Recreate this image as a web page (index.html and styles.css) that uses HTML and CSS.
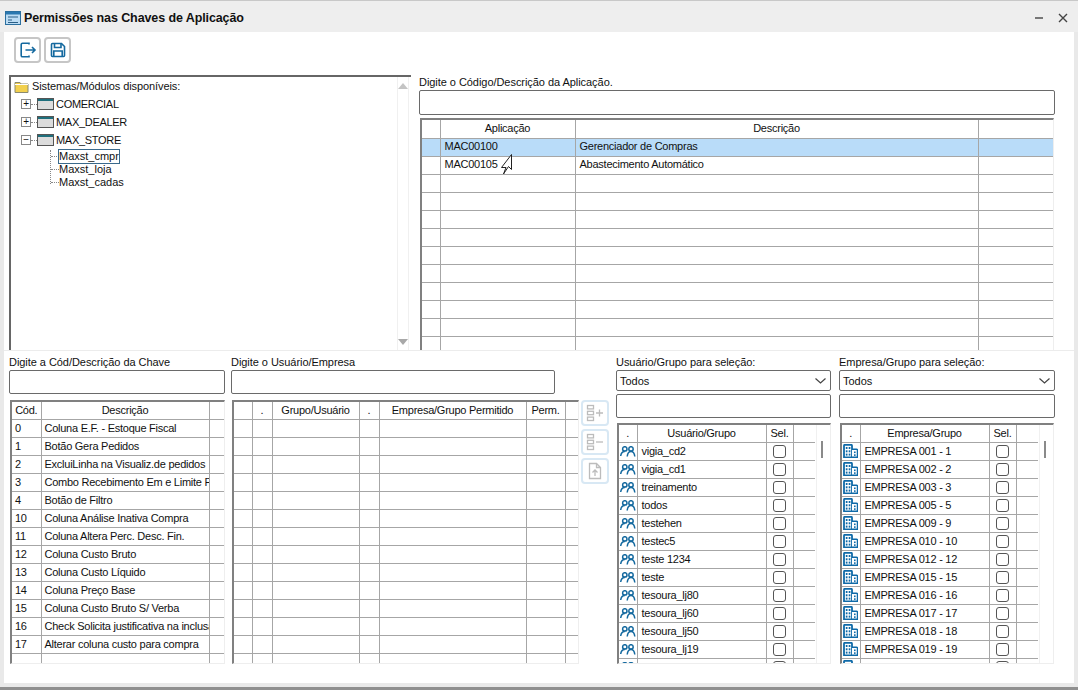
FILE: index.html
```html
<!DOCTYPE html>
<html lang="pt">
<head>
<meta charset="utf-8">
<title>Permissões nas Chaves de Aplicação</title>
<link rel="stylesheet" href="styles.css">
</head>
<body>
<svg class="defs" width="0" height="0">
  <symbol id="i-users" viewBox="0 0 16 11">
    <g fill="none" stroke="#14699f" stroke-width="1.500">
      <circle cx="4.800" cy="2.900" r="2.200"/><path d="M.7 10c.3-2.800 1.600-4.500 4.100-4.500"/>
      <circle cx="11" cy="2.900" r="2.200"/><path d="M7.200 10.500c.3-3 1.700-5 3.800-5s3.500 2 3.800 5"/>
    </g>
  </symbol>
  <symbol id="i-building" viewBox="0 0 15 14">
    <path d="M1 13.300V1.800q0-1 1-1h6q1 0 1 1v11.500z" fill="#fff" stroke="#0f6aa8" stroke-width="1.800"/>
    <path d="M9 5.300h4.500q1 0 1 1v7H9" fill="#fff" stroke="#0f6aa8" stroke-width="1.500"/>
    <g fill="#0f6aa8"><rect x="2.800" y="3" width="1.700" height="2"/><rect x="5.700" y="3" width="1.700" height="2"/><rect x="2.800" y="6.300" width="1.700" height="2"/><rect x="5.700" y="6.300" width="1.700" height="2"/><rect x="2.800" y="9.600" width="1.700" height="2"/><rect x="5.700" y="9.600" width="1.700" height="2"/><rect x="11" y="7.500" width="1.600" height="1.600"/><rect x="11" y="10.300" width="1.600" height="1.600"/></g>
  </symbol>
  <symbol id="i-table" viewBox="0 0 17 12">
    <rect x=".5" y=".5" width="16" height="11" fill="#dcdcdc" stroke="#555"/>
    <rect x="1" y="1" width="15" height="2" fill="#1f6f7c"/>
  </symbol>
</svg>
<div class="window">
  <header class="titlebar">
    <svg class="title-icon" width="16" height="14" viewBox="0 0 16 14">
      <rect x=".5" y=".5" width="15" height="13" fill="#bcdcf4" stroke="#2b6f9f"/>
      <rect x="1" y="1" width="14" height="2.500" fill="#2b78b0"/>
      <path d="M3 6h10M3 9h4M3 11.500h10" stroke="#2b5f86" stroke-width="1.200"/>
    </svg>
    <h1 class="title">Permissões nas Chaves de Aplicação</h1>
    <span class="win-min"></span>
    <svg class="win-close" width="10" height="10" viewBox="0 0 10 10"><path d="M1 1l8 8M9 1L1 9" stroke="#444" stroke-width="1.400"/></svg>
  </header>
  <main class="content">
    <div class="toolbar">
      <button class="tool" type="button" aria-label="Sair">
        <svg width="18" height="18" viewBox="0 0 18 18" fill="none" stroke="#14699f" stroke-width="1.600"><path d="M10 3.500V2.200H3.600q-1.400 0-1.400 1.400v10.800q0 1.400 1.400 1.400H10v-1.300"/><path d="M6.500 9h9.500M13 6l3 3-3 3"/></svg>
      </button>
      <button class="tool" type="button" aria-label="Salvar">
        <svg width="16" height="16" viewBox="0 0 16 16" fill="none" stroke="#14699f" stroke-width="1.600"><path d="M1.500 2.500q0-1 1-1h9l3 3v9q0 1-1 1h-11q-1 0-1-1z"/><path d="M4.500 1.500v4h6.500v-4M3.800 14.500V9h8.400v5.500"/></svg>
      </button>
    </div>

    <section class="upper">
      <div class="tree">
        <div class="tree-root">
          <svg width="15" height="13" viewBox="0 0 15 13"><path d="M1 2.500h5l1 1.500h7v8.500H1z" fill="#f2d04e" stroke="#8a8a70"/><path d="M1 4.500h13" stroke="#fff"/></svg>
          <span>Sistemas/Módulos disponíveis:</span>
        </div>
        <div class="tree-node"><span class="exp">+</span><span class="dash"></span><svg width="17" height="12"><use href="#i-table"/></svg><span class="node-name">COMERCIAL</span></div>
        <div class="tree-node"><span class="exp">+</span><span class="dash"></span><svg width="17" height="12"><use href="#i-table"/></svg><span class="node-name">MAX_DEALER</span></div>
        <div class="tree-node"><span class="exp">−</span><span class="dash"></span><svg width="17" height="12"><use href="#i-table"/></svg><span class="node-name">MAX_STORE</span></div>
        <div class="tree-leaves">
          <div class="leaf"><span class="leaf-text focused">Maxst_cmpr</span></div>
          <div class="leaf"><span class="leaf-text">Maxst_loja</span></div>
          <div class="leaf"><span class="leaf-text">Maxst_cadas</span></div>
        </div>
        <div class="tree-scroll">
          <span class="arrow-up"></span>
          <span class="arrow-down"></span>
        </div>
      </div>

      <div class="app-panel">
        <label class="lbl">Digite o Código/Descrição da Aplicação.</label>
        <input class="field field-app" type="text">
        <div class="grid grid-app">
          <table>
            <colgroup><col class="w18"><col class="w135"><col class="w403"><col></colgroup>
            <thead><tr><th></th><th>Aplicação</th><th>Descrição</th><th></th></tr></thead>
            <tbody>
              <tr class="selected"><td></td><td>MAC00100</td><td>Gerenciador de Compras</td><td></td></tr>
              <tr><td></td><td>MAC00105</td><td>Abastecimento Automático</td><td></td></tr>
              <tr><td></td><td></td><td></td><td></td></tr>
              <tr><td></td><td></td><td></td><td></td></tr>
              <tr><td></td><td></td><td></td><td></td></tr>
              <tr><td></td><td></td><td></td><td></td></tr>
              <tr><td></td><td></td><td></td><td></td></tr>
              <tr><td></td><td></td><td></td><td></td></tr>
              <tr><td></td><td></td><td></td><td></td></tr>
              <tr><td></td><td></td><td></td><td></td></tr>
              <tr><td></td><td></td><td></td><td></td></tr>
              <tr><td></td><td></td><td></td><td></td></tr>
            </tbody>
          </table>
          <svg class="cursor" width="14" height="24" viewBox="0 0 14 24" fill="#fff" stroke="#222"><path d="M11.500 1.500v15l-3-3-5 7.500 2.500-6.500H1.500z"/></svg>
        </div>
      </div>
    </section>

    <section class="lower">
      <div class="col col-key">
        <label class="lbl">Digite a Cód/Descrição da Chave</label>
        <input class="field" type="text">
        <div class="grid grid-low">
          <table>
            <colgroup><col class="w29"><col class="w168"><col></colgroup>
            <thead><tr><th>Cód.</th><th>Descrição</th><th></th></tr></thead>
            <tbody>
              <tr><td>0</td><td>Coluna E.F. - Estoque Fiscal</td><td></td></tr>
              <tr><td>1</td><td>Botão Gera Pedidos</td><td></td></tr>
              <tr><td>2</td><td>ExcluiLinha na Visualiz.de pedidos</td><td></td></tr>
              <tr><td>3</td><td>Combo Recebimento Em e Limite Pedidos</td><td></td></tr>
              <tr><td>4</td><td>Botão de Filtro</td><td></td></tr>
              <tr><td>10</td><td>Coluna Análise Inativa Compra</td><td></td></tr>
              <tr><td>11</td><td>Coluna Altera Perc. Desc. Fin.</td><td></td></tr>
              <tr><td>12</td><td>Coluna Custo Bruto</td><td></td></tr>
              <tr><td>13</td><td>Coluna Custo Líquido</td><td></td></tr>
              <tr><td>14</td><td>Coluna Preço Base</td><td></td></tr>
              <tr><td>15</td><td>Coluna Custo Bruto S/ Verba</td><td></td></tr>
              <tr><td>16</td><td>Check Solicita justificativa na inclusão</td><td></td></tr>
              <tr><td>17</td><td>Alterar coluna custo para compra</td><td></td></tr>
              <tr><td></td><td></td><td></td></tr>
            </tbody>
          </table>
        </div>
      </div>

      <div class="col col-user">
        <label class="lbl">Digite o Usuário/Empresa</label>
        <input class="field" type="text">
        <div class="grid grid-low">
          <table>
            <colgroup><col class="w18"><col class="w20"><col class="w87"><col class="w20"><col class="w147"><col class="w39"><col></colgroup>
            <thead><tr><th></th><th>.</th><th>Grupo/Usuário</th><th>.</th><th>Empresa/Grupo Permitido</th><th>Perm.</th><th></th></tr></thead>
            <tbody>
              <tr><td></td><td></td><td></td><td></td><td></td><td></td><td></td></tr>
              <tr><td></td><td></td><td></td><td></td><td></td><td></td><td></td></tr>
              <tr><td></td><td></td><td></td><td></td><td></td><td></td><td></td></tr>
              <tr><td></td><td></td><td></td><td></td><td></td><td></td><td></td></tr>
              <tr><td></td><td></td><td></td><td></td><td></td><td></td><td></td></tr>
              <tr><td></td><td></td><td></td><td></td><td></td><td></td><td></td></tr>
              <tr><td></td><td></td><td></td><td></td><td></td><td></td><td></td></tr>
              <tr><td></td><td></td><td></td><td></td><td></td><td></td><td></td></tr>
              <tr><td></td><td></td><td></td><td></td><td></td><td></td><td></td></tr>
              <tr><td></td><td></td><td></td><td></td><td></td><td></td><td></td></tr>
              <tr><td></td><td></td><td></td><td></td><td></td><td></td><td></td></tr>
              <tr><td></td><td></td><td></td><td></td><td></td><td></td><td></td></tr>
              <tr><td></td><td></td><td></td><td></td><td></td><td></td><td></td></tr>
              <tr><td></td><td></td><td></td><td></td><td></td><td></td><td></td></tr>
            </tbody>
          </table>
        </div>
      </div>

      <div class="actions">
        <button class="act" type="button" aria-label="Adicionar">
          <svg width="20" height="20" viewBox="0 0 20 20" fill="none" stroke="#bcbcbc" stroke-width="1.300"><rect x="2.500" y="2.500" width="6" height="3.400"/><rect x="2.500" y="8.300" width="6" height="3.400"/><rect x="2.500" y="14.100" width="6" height="3.400"/><path d="M11 10h7M14.500 6.500v7"/></svg>
        </button>
        <button class="act" type="button" aria-label="Remover">
          <svg width="20" height="20" viewBox="0 0 20 20" fill="none" stroke="#bcbcbc" stroke-width="1.300"><rect x="2.500" y="2.500" width="6" height="3.400"/><rect x="2.500" y="8.300" width="6" height="3.400"/><rect x="2.500" y="14.100" width="6" height="3.400"/><path d="M11 10h7"/></svg>
        </button>
        <button class="act" type="button" aria-label="Copiar">
          <svg width="20" height="20" viewBox="0 0 20 20" fill="none" stroke="#bcbcbc" stroke-width="1.300"><path d="M4.500 2.500h7l4 4v11h-11zM11.500 2.500v4h4"/><path d="M10 15V9M7.500 11.500L10 9l2.500 2.500"/></svg>
        </button>
      </div>

      <div class="col col-sel">
        <label class="lbl">Usuário/Grupo para seleção:</label>
        <div class="select"><span>Todos</span><svg width="11" height="6" viewBox="0 0 11 6" fill="none" stroke="#444" stroke-width="1.200"><path d="M.5.500l5 4.500 5-4.500"/></svg></div>
        <input class="field field-sel" type="text">
        <div class="grid grid-sel">
          <table>
            <colgroup><col class="w18"><col class="w129"><col class="w27"><col></colgroup>
            <thead><tr><th>.</th><th>Usuário/Grupo</th><th>Sel.</th><th></th></tr></thead>
            <tbody>
              <tr><td class="ic"><svg width="16" height="11"><use href="#i-users"/></svg></td><td>vigia_cd2</td><td class="ck"><span class="box"></span></td><td></td></tr>
              <tr><td class="ic"><svg width="16" height="11"><use href="#i-users"/></svg></td><td>vigia_cd1</td><td class="ck"><span class="box"></span></td><td></td></tr>
              <tr><td class="ic"><svg width="16" height="11"><use href="#i-users"/></svg></td><td>treinamento</td><td class="ck"><span class="box"></span></td><td></td></tr>
              <tr><td class="ic"><svg width="16" height="11"><use href="#i-users"/></svg></td><td>todos</td><td class="ck"><span class="box"></span></td><td></td></tr>
              <tr><td class="ic"><svg width="16" height="11"><use href="#i-users"/></svg></td><td>testehen</td><td class="ck"><span class="box"></span></td><td></td></tr>
              <tr><td class="ic"><svg width="16" height="11"><use href="#i-users"/></svg></td><td>testec5</td><td class="ck"><span class="box"></span></td><td></td></tr>
              <tr><td class="ic"><svg width="16" height="11"><use href="#i-users"/></svg></td><td>teste 1234</td><td class="ck"><span class="box"></span></td><td></td></tr>
              <tr><td class="ic"><svg width="16" height="11"><use href="#i-users"/></svg></td><td>teste</td><td class="ck"><span class="box"></span></td><td></td></tr>
              <tr><td class="ic"><svg width="16" height="11"><use href="#i-users"/></svg></td><td>tesoura_lj80</td><td class="ck"><span class="box"></span></td><td></td></tr>
              <tr><td class="ic"><svg width="16" height="11"><use href="#i-users"/></svg></td><td>tesoura_lj60</td><td class="ck"><span class="box"></span></td><td></td></tr>
              <tr><td class="ic"><svg width="16" height="11"><use href="#i-users"/></svg></td><td>tesoura_lj50</td><td class="ck"><span class="box"></span></td><td></td></tr>
              <tr><td class="ic"><svg width="16" height="11"><use href="#i-users"/></svg></td><td>tesoura_lj19</td><td class="ck"><span class="box"></span></td><td></td></tr>
              <tr><td class="ic"><svg width="16" height="11"><use href="#i-users"/></svg></td><td>tesoura_lj18</td><td class="ck"><span class="box"></span></td><td></td></tr>
            </tbody>
          </table>
          <div class="vscroll"><span class="thumb"></span></div>
        </div>
      </div>

      <div class="col col-emp">
        <label class="lbl">Empresa/Grupo para seleção:</label>
        <div class="select"><span>Todos</span><svg width="11" height="6" viewBox="0 0 11 6" fill="none" stroke="#444" stroke-width="1.200"><path d="M.5.500l5 4.500 5-4.500"/></svg></div>
        <input class="field field-sel" type="text">
        <div class="grid grid-sel">
          <table>
            <colgroup><col class="w18"><col class="w129"><col class="w27"><col></colgroup>
            <thead><tr><th>.</th><th>Empresa/Grupo</th><th>Sel.</th><th></th></tr></thead>
            <tbody>
              <tr><td class="ic"><svg width="15" height="14"><use href="#i-building"/></svg></td><td>EMPRESA 001 - 1</td><td class="ck"><span class="box"></span></td><td></td></tr>
              <tr><td class="ic"><svg width="15" height="14"><use href="#i-building"/></svg></td><td>EMPRESA 002 - 2</td><td class="ck"><span class="box"></span></td><td></td></tr>
              <tr><td class="ic"><svg width="15" height="14"><use href="#i-building"/></svg></td><td>EMPRESA 003 - 3</td><td class="ck"><span class="box"></span></td><td></td></tr>
              <tr><td class="ic"><svg width="15" height="14"><use href="#i-building"/></svg></td><td>EMPRESA 005 - 5</td><td class="ck"><span class="box"></span></td><td></td></tr>
              <tr><td class="ic"><svg width="15" height="14"><use href="#i-building"/></svg></td><td>EMPRESA 009 - 9</td><td class="ck"><span class="box"></span></td><td></td></tr>
              <tr><td class="ic"><svg width="15" height="14"><use href="#i-building"/></svg></td><td>EMPRESA 010 - 10</td><td class="ck"><span class="box"></span></td><td></td></tr>
              <tr><td class="ic"><svg width="15" height="14"><use href="#i-building"/></svg></td><td>EMPRESA 012 - 12</td><td class="ck"><span class="box"></span></td><td></td></tr>
              <tr><td class="ic"><svg width="15" height="14"><use href="#i-building"/></svg></td><td>EMPRESA 015 - 15</td><td class="ck"><span class="box"></span></td><td></td></tr>
              <tr><td class="ic"><svg width="15" height="14"><use href="#i-building"/></svg></td><td>EMPRESA 016 - 16</td><td class="ck"><span class="box"></span></td><td></td></tr>
              <tr><td class="ic"><svg width="15" height="14"><use href="#i-building"/></svg></td><td>EMPRESA 017 - 17</td><td class="ck"><span class="box"></span></td><td></td></tr>
              <tr><td class="ic"><svg width="15" height="14"><use href="#i-building"/></svg></td><td>EMPRESA 018 - 18</td><td class="ck"><span class="box"></span></td><td></td></tr>
              <tr><td class="ic"><svg width="15" height="14"><use href="#i-building"/></svg></td><td>EMPRESA 019 - 19</td><td class="ck"><span class="box"></span></td><td></td></tr>
              <tr><td class="ic"><svg width="15" height="14"><use href="#i-building"/></svg></td><td>EMPRESA 050 - 50</td><td class="ck"><span class="box"></span></td><td></td></tr>
            </tbody>
          </table>
          <div class="vscroll"><span class="thumb"></span></div>
        </div>
      </div>
    </section>
  </main>
</div>
</body>
</html>
```
FILE: styles.css
```css
* { box-sizing: border-box; }
html, body { margin: 0; padding: 0; height: 100%; }
body { background: #e9e9e9; font: 11px/14px "Liberation Sans", Arial, sans-serif; color: #111; overflow: hidden; }
.defs { position: absolute; }
.window { width: 1078px; height: 690px; display: flex; flex-direction: column; border-top: 1px solid #c8c8c8; border-bottom: 3px solid #8f8f8f; }
.titlebar { height: 31px; flex: none; background: #eeeeee; display: flex; align-items: center; padding: 3px 10px 0 5px; }
.title-icon { flex: none; margin-right: 3px; }
.title { margin: 0; font-size: 12.5px; letter-spacing: -0.1px; font-weight: 700; color: #111; flex: 1; }
.win-min { width: 8px; height: 2px; background: #777; margin-right: 15px; }
.win-close { display: block; }

.content { flex: 1; margin: 0 4px 4px; background: #fff; display: flex; flex-direction: column; min-height: 0; }
.toolbar { display: flex; gap: 3px; padding: 5px 0 0 10px; height: 43px; flex: none; align-items: flex-start; }
.tool { width: 27px; height: 26px; padding: 0; background: #fff; border: 2px solid #c6c6c6; border-radius: 4px; display: flex; align-items: center; justify-content: center; }

.upper { display: flex; height: 276px; flex: none; border-bottom: 1px solid #ececec; }
.tree { position: relative; width: 402px; margin-left: 5px; border-top: 2px solid #666; border-left: 2px solid #666; padding: 0 0 0 3px; overflow: hidden; flex: none; letter-spacing: -0.1px; }
.tree-root { display: flex; align-items: center; gap: 3px; height: 18px; }
.tree-root svg { flex: none; }
.tree-node { display: flex; align-items: center; height: 18px; padding-left: 7px; }
.exp { width: 10px; height: 10px; border: 1px solid #888; font-size: 10px; line-height: 8px; text-align: center; background: #fff; flex: none; }
.dash { width: 6px; border-top: 1px dotted #888; flex: none; }
.node-name { margin-left: 2px; letter-spacing: -0.3px; }
.tree-leaves { margin: 1px 0 0 36px; border-left: 1px dotted #888; width: 100px; height: 34px; }
.leaf { height: 13px; display: flex; align-items: center; }
.leaf::before { content: ""; width: 8px; border-top: 1px dotted #888; flex: none; }
.leaf-text { line-height: 13px; letter-spacing: 0; }
.focused { outline: 1px solid #3a6a8c; }
.tree-scroll { position: absolute; right: 2px; top: 0; bottom: 0; width: 12px; border-left: 1px solid #f0f0f0; border-right: 1px solid #f0f0f0; }
.arrow-up, .arrow-down { position: absolute; left: 0; width: 0; height: 0; border-left: 5px solid transparent; border-right: 5px solid transparent; }
.arrow-up { top: 6px; border-bottom: 6px solid #c4c4c4; }
.arrow-down { bottom: 5px; border-top: 6px solid #a8a8a8; }

.app-panel { margin-left: 8px; width: 636px; flex: none; display: flex; flex-direction: column; min-height: 0; }
.lbl { display: block; height: 15px; line-height: 15px; white-space: nowrap; letter-spacing: -0.05px; }
.field { display: block; width: 100%; height: 24px; border: 1px solid #6a6a6a; border-radius: 2px; background: #fff; padding: 0; margin: 0; }
.field-app { height: 25px; }
.grid { position: relative; overflow: hidden; border-top: 2px solid #808080; border-left: 2px solid #808080; background: #fff; letter-spacing: -0.25px; }
.grid table { border-collapse: collapse; table-layout: fixed; width: 100%; }
.grid th { height: 17px; font-weight: 400; text-align: center; border-right: 1px solid #a6a6a6; border-bottom: 1px solid #a6a6a6; padding: 0; white-space: nowrap; overflow: hidden; }
.grid td { height: 18px; padding: 0 0 0 3px; border-right: 1px solid #a6a6a6; border-bottom: 1px solid #a6a6a6; white-space: nowrap; overflow: hidden; }
.grid th:last-child, .grid td:last-child { border-right: 0; }
.grid-app { margin: 3px 1px 0; flex: 1; min-height: 0; border-right: 1px solid #eee; }
.grid-app th { height: 18px; padding-bottom: 2px; }
.grid-app td { padding-bottom: 2px; padding-left: 4px; }
.grid-low td { padding-bottom: 1px; }
.selected td { background: #b9dcf9; }
.cursor { position: absolute; left: 78px; top: 33px; }
.w18 { width: 18px; } .w20 { width: 20px; } .w135 { width: 135px; } .w403 { width: 403px; }
.w29 { width: 29px; } .w168 { width: 168px; } .w87 { width: 87px; }
.w147 { width: 147px; } .w39 { width: 39px; } .w129 { width: 129px; } .w27 { width: 27px; }

.lower { flex: 1; display: flex; padding-top: 4px; min-height: 0; }
.col { display: flex; flex-direction: column; flex: none; min-height: 0; }
.col-key { width: 216px; margin-left: 5px; }
.col-user { width: 324px; margin-left: 6px; }
.col-sel { width: 215px; margin-left: 7px; }
.col-emp { width: 216px; margin-left: 8px; }
.grid-low { margin: 6px 0 0 1px; height: 264px; border-right: 1px solid #eee; border-bottom: 1px solid #eee; flex: none; }
.col-user .grid-low { width: 347px; }
.select { display: flex; align-items: center; justify-content: space-between; height: 21px; border: 1px solid #6a6a6a; border-radius: 2px; padding: 0 4px 0 3px; background: #fff; flex: none; }
.field-sel { margin-top: 3px; height: 24px; flex: none; }
.grid-sel { margin: 5px 0 0 1px; height: 241px; width: 214px; border-right: 1px solid #eee; border-bottom: 1px solid #eee; flex: none; }
.grid-sel table { width: 196px; }
.grid-sel td { padding-left: 4px; }
.grid-sel td.ic { padding: 0; text-align: center; line-height: 0; vertical-align: middle; }
.grid-sel .ic svg { display: inline-block; vertical-align: middle; }
.grid-sel td.ck { padding: 0; text-align: center; line-height: 0; vertical-align: middle; }
.box { display: inline-block; width: 13px; height: 13px; border: 1px solid #555; border-radius: 3px; background: #fff; vertical-align: middle; }
.vscroll { position: absolute; right: 0; top: 0; bottom: 0; width: 14px; border-left: 1px solid #f0f0f0; }
.thumb { position: absolute; left: 4px; top: 16px; width: 2px; height: 17px; background: #8a8a8a; }

.actions { display: flex; flex-direction: column; gap: 3px; padding-top: 45px; width: 28px; flex: none; margin-left: 26px; }
.act { width: 28px; height: 26px; padding: 0; background: #fff; border: 2px solid #d8e8f4; border-radius: 4px; display: flex; align-items: center; justify-content: center; }
```
